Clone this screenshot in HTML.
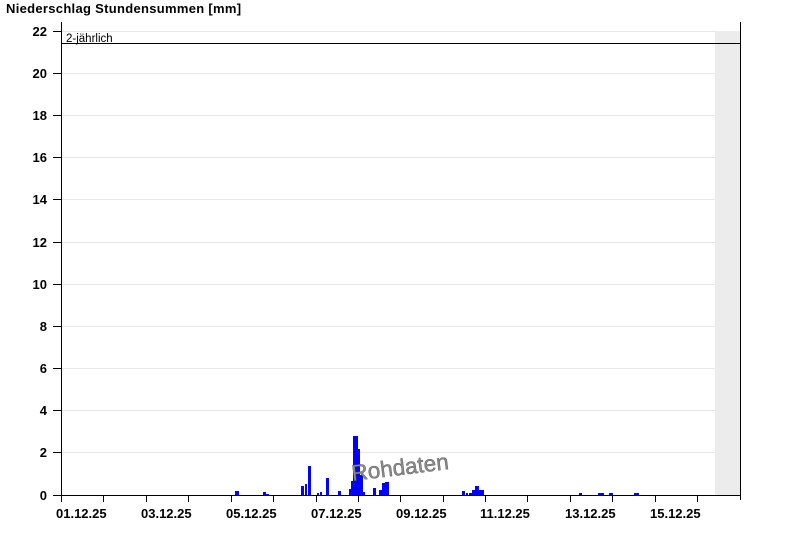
<!DOCTYPE html><html><head><style>body{margin:0;background:#fff;width:800px;height:550px;overflow:hidden}svg{display:block}</style></head><body>
<svg width="800" height="550" xmlns="http://www.w3.org/2000/svg" font-family="Liberation Sans, Arial, sans-serif">
<text x="6" y="13" font-size="13" font-weight="bold" letter-spacing="0.3">Niederschlag Stundensummen [mm]</text>
<rect x="715" y="31" width="25" height="464" fill="#ececec"/>
<g stroke="#e8e8e8" stroke-width="1">
<line x1="61" x2="715" y1="31.5" y2="31.5"/><line x1="61" x2="715" y1="73.5" y2="73.5"/><line x1="61" x2="715" y1="115.5" y2="115.5"/><line x1="61" x2="715" y1="157.5" y2="157.5"/><line x1="61" x2="715" y1="199.5" y2="199.5"/><line x1="61" x2="715" y1="242.5" y2="242.5"/><line x1="61" x2="715" y1="284.5" y2="284.5"/><line x1="61" x2="715" y1="326.5" y2="326.5"/><line x1="61" x2="715" y1="368.5" y2="368.5"/><line x1="61" x2="715" y1="410.5" y2="410.5"/><line x1="61" x2="715" y1="452.5" y2="452.5"/>
</g>
<g fill="#0000ff">
<rect x="235" y="491" width="4" height="4"/><rect x="263" y="492" width="3" height="3"/><rect x="266" y="494" width="3" height="1"/>
<rect x="301" y="486" width="3" height="9"/><rect x="305" y="484" width="2" height="11"/><rect x="308" y="466" width="3" height="29"/>
<rect x="317" y="493" width="2" height="2"/><rect x="320" y="492" width="2" height="3"/><rect x="326" y="478" width="3" height="17"/>
<rect x="338" y="491" width="3" height="4"/><rect x="349" y="489" width="2" height="6"/><rect x="351" y="481" width="2" height="14"/><rect x="353" y="436" width="5" height="59"/><rect x="358" y="449" width="2" height="46"/><rect x="360" y="475" width="3" height="20"/><rect x="363" y="492" width="2" height="3"/>
<rect x="373" y="488" width="3" height="7"/><rect x="379" y="490" width="3" height="5"/><rect x="382" y="483" width="3" height="12"/><rect x="385" y="482" width="4" height="13"/>
<rect x="462" y="491" width="3" height="4"/><rect x="466" y="493" width="2" height="2"/><rect x="469" y="493" width="3" height="2"/><rect x="472" y="490" width="3" height="5"/><rect x="475" y="486" width="4" height="9"/><rect x="479" y="490" width="5" height="5"/>
<rect x="579" y="493" width="3" height="2"/><rect x="598" y="493" width="6" height="2"/><rect x="609" y="493" width="4" height="2"/><rect x="634" y="493" width="5" height="2"/>
</g>
<line x1="61" x2="740" y1="43.5" y2="43.5" stroke="#000"/>
<text x="66" y="42" font-size="11.5">2-jährlich</text>
<g stroke="#000" stroke-width="1">
<line x1="61.5" x2="61.5" y1="22" y2="495"/><line x1="740.5" x2="740.5" y1="22" y2="500"/><line x1="55" x2="740" y1="495.5" y2="495.5"/>
<line x1="53" x2="61" y1="31.5" y2="31.5"/><line x1="53" x2="61" y1="73.5" y2="73.5"/><line x1="53" x2="61" y1="115.5" y2="115.5"/><line x1="53" x2="61" y1="157.5" y2="157.5"/><line x1="53" x2="61" y1="199.5" y2="199.5"/><line x1="53" x2="61" y1="242.5" y2="242.5"/><line x1="53" x2="61" y1="284.5" y2="284.5"/><line x1="53" x2="61" y1="326.5" y2="326.5"/><line x1="53" x2="61" y1="368.5" y2="368.5"/><line x1="53" x2="61" y1="410.5" y2="410.5"/><line x1="53" x2="61" y1="452.5" y2="452.5"/><line x1="53" x2="61" y1="495.5" y2="495.5"/>
<line x1="61.5" x2="61.5" y1="495" y2="502"/><line x1="103.5" x2="103.5" y1="495" y2="502"/><line x1="146.5" x2="146.5" y1="495" y2="502"/><line x1="188.5" x2="188.5" y1="495" y2="502"/><line x1="231.5" x2="231.5" y1="495" y2="502"/><line x1="273.5" x2="273.5" y1="495" y2="502"/><line x1="316.5" x2="316.5" y1="495" y2="502"/><line x1="358.5" x2="358.5" y1="495" y2="502"/><line x1="400.5" x2="400.5" y1="495" y2="502"/><line x1="443.5" x2="443.5" y1="495" y2="502"/><line x1="485.5" x2="485.5" y1="495" y2="502"/><line x1="527.5" x2="527.5" y1="495" y2="502"/><line x1="570.5" x2="570.5" y1="495" y2="502"/><line x1="612.5" x2="612.5" y1="495" y2="502"/><line x1="655.5" x2="655.5" y1="495" y2="502"/><line x1="697.5" x2="697.5" y1="495" y2="502"/>
</g>
<g font-size="13" font-weight="bold" text-anchor="end">
<text x="47" y="36">22</text><text x="47" y="78">20</text><text x="47" y="120">18</text><text x="47" y="162">16</text><text x="47" y="204">14</text><text x="47" y="247">12</text><text x="47" y="289">10</text><text x="47" y="331">8</text><text x="47" y="373">6</text><text x="47" y="415">4</text><text x="47" y="457">2</text><text x="47" y="500">0</text>
</g>
<g font-size="13" font-weight="bold">
<text x="56" y="518">01.12.25</text><text x="141" y="518">03.12.25</text><text x="226" y="518">05.12.25</text><text x="311" y="518">07.12.25</text><text x="396" y="518">09.12.25</text><text x="480" y="518">11.12.25</text><text x="565" y="518">13.12.25</text><text x="650" y="518">15.12.25</text>
</g>
<text x="400" y="475" font-size="22.5" text-anchor="middle" fill="#8a8a8a" stroke="#555" stroke-width="0.4" transform="rotate(-7 400 467)">Rohdaten</text>
</svg>
</body></html>
